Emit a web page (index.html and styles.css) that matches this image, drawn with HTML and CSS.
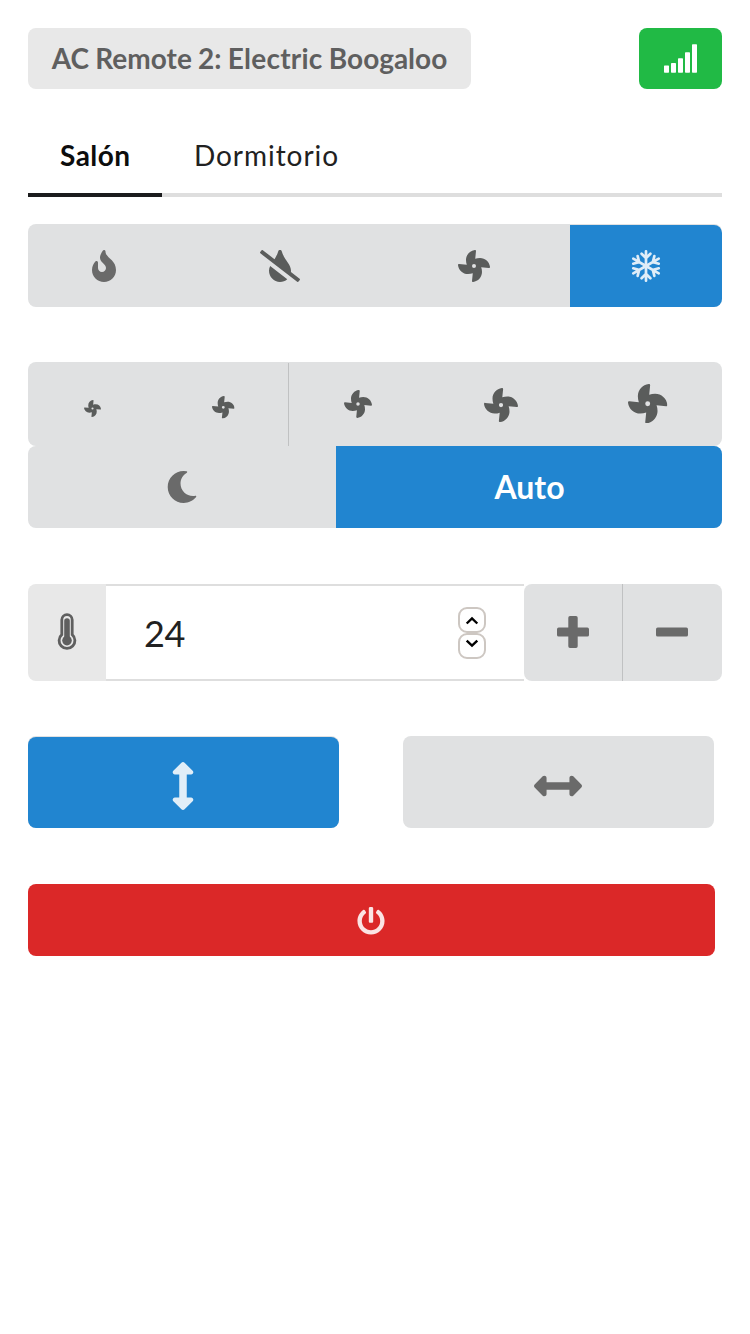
FILE: index.html
```html
<!DOCTYPE html>
<html lang="es">
<head>
<meta charset="utf-8">
<title>AC Remote 2: Electric Boogaloo</title>
<link rel="stylesheet" href="styles.css">
</head>
<body>
<svg class="defs" aria-hidden="true">
  <symbol id="fan" viewBox="0 0 512 512"><path d="M352.57 128c-28.09 0-54.09 4.52-77.06 12.86l12.41-123.11C289 7.31 279.81-1.18 269.33.13 189.63 10.13 128 77.64 128 159.43c0 28.09 4.52 54.09 12.86 77.06L17.75 224.08C7.31 223-1.18 232.19.13 242.67c10 79.7 77.51 141.33 159.3 141.33 28.09 0 54.09-4.52 77.06-12.86l-12.41 123.11c-1.05 10.43 8.11 18.93 18.59 17.62 79.7-10 141.33-77.51 141.33-159.3 0-28.09-4.52-54.09-12.86-77.06l123.11 12.41c10.44 1.05 18.93-8.11 17.62-18.59-10-79.7-77.51-141.33-159.3-141.33zM256 288a32 32 0 1 1 32-32 32 32 0 0 1-32 32z"/></symbol>
  <symbol id="arrows" viewBox="0 0 256 512"><path d="M214.059 377.941H168V134.059h46.059c21.382 0 32.09-25.851 16.971-40.971L144.971 7.029c-9.373-9.373-24.568-9.373-33.941 0L24.971 93.088c-15.119 15.119-4.411 40.971 16.971 40.971H88v243.882H41.941c-21.382 0-32.09 25.851-16.971 40.971l86.059 86.059c9.373 9.373 24.568 9.373 33.941 0l86.059-86.059c15.12-15.119 4.412-40.971-16.97-40.971z"/></symbol>
</svg>
<main class="remote">
  <header class="top">
    <h1 class="title">AC Remote 2: <span class="title-wide">Electric</span> Boogaloo</h1>
    <div class="signal"><svg width="33" height="29" viewBox="0 0 33 29"><rect y="21.4" width="5" height="7.3" rx=".7"/><rect x="7" y="19" width="5" height="9.7" rx=".7"/><rect x="14" y="14.3" width="5" height="14.4" rx=".7"/><rect x="21" y="8.3" width="5" height="20.4" rx=".7"/><rect x="28" y=".2" width="5" height="28.5" rx=".7"/></svg></div>
  </header>
  <nav class="tabs">
    <a class="tab tab-active">Salón</a>
    <a class="tab tab-second">Dormitorio</a>
  </nav>
  <div class="group modes">
    <button class="seg"><svg class="soft" width="24" height="32" viewBox="0 0 384 512"><path d="M216 23.86c0-23.8-30.65-32.77-44.15-13.04C48 191.85 224 200 224 288c0 35.63-29.11 64.46-64.85 63.99-35.17-.45-63.15-29.77-63.15-64.94v-85.51c0-21.7-26.47-32.23-41.43-16.5C27.8 213.16 0 261.33 0 320c0 105.87 86.13 192 192 192s192-86.13 192-192c0-170.29-168-193-168-296.14z"/></svg></button>
    <button class="seg"><svg width="40" height="32" viewBox="0 0 640 512"><path d="M633.82 458.1L494.97 350.78c.52-5.57 1.03-11.16 1.03-16.87 0-111.76-99.79-153.34-146.78-311.82-7.94-28.78-49.44-30.12-58.44 0-15.52 52.34-36.87 91.96-58.49 125.68L45.47 3.37C38.49-2.05 28.43-.8 23.01 6.18L3.37 31.45C-2.05 38.42-.8 48.47 6.18 53.9l588.36 454.73c6.98 5.43 17.03 4.17 22.46-2.81l19.64-25.27c5.41-6.97 4.16-17.02-2.82-22.45zM144 333.91C144 432.35 222.72 512 320 512c44.71 0 85.37-16.96 116.4-44.7L162.72 255.78c-11.41 23.5-18.72 48.35-18.72 78.13z"/></svg></button>
    <button class="seg"><svg width="32" height="32"><use href="#fan"/></svg></button>
    <button class="seg active"><svg class="snow" width="32" height="32" viewBox="-16 -16 32 32"><g id="arm"><path d="M0 0V-14.700M-4.400-12.200L0-7.900l4.400-4.300"/></g><use href="#arm" transform="rotate(60)"/><use href="#arm" transform="rotate(120)"/><use href="#arm" transform="rotate(180)"/><use href="#arm" transform="rotate(240)"/><use href="#arm" transform="rotate(300)"/></svg></button>
  </div>
  <div class="group speeds">
    <button class="seg speed-1"><svg width="17" height="17"><use href="#fan"/></svg></button>
    <button class="seg speed-2"><svg width="22.6" height="22.6"><use href="#fan"/></svg></button>
    <button class="seg speed-3"><svg width="28" height="28"><use href="#fan"/></svg></button>
    <button class="seg speed-4"><svg width="34" height="34"><use href="#fan"/></svg></button>
    <button class="seg speed-5"><svg width="39.4" height="39.4"><use href="#fan"/></svg></button>
  </div>
  <div class="group extras">
    <button class="seg"><svg class="soft" width="32" height="32" viewBox="0 0 512 512"><path d="M283.211 512c78.962 0 151.079-35.925 198.857-94.792 7.068-8.708-.639-21.43-11.562-19.35-124.203 23.654-238.262-71.576-238.262-196.954 0-72.222 38.662-138.635 101.498-174.394 9.686-5.512 7.25-20.197-3.756-22.23A258.156 258.156 0 0 0 283.211 0c-141.309 0-256 114.511-256 256 0 141.309 114.511 256 256 256z"/></svg></button>
    <button class="seg active auto">Auto</button>
  </div>
  <div class="temperature">
    <div class="thermo"><svg width="20" height="38" viewBox="0 0 20 38"><path class="tube" d="M4.800 21.600V6.800a5.200 5.200 0 0 1 10.400 0v14.800a7.900 7.900 0 1 1-10.400 0z"/><path class="mercury" d="M10 8.100V27"/><circle cx="10" cy="27.600" r="4.800"/></svg></div>
    <div class="field"><span class="value">24</span>
      <div class="spinner"><span class="step"><svg width="14" height="9" viewBox="0 0 14 9"><path d="M1.700 7.500l5.300-5 5.300 5"/></svg></span><span class="step step-down"><svg width="14" height="9" viewBox="0 0 14 9"><path d="M1.700 1.700l5.300 5 5.300-5"/></svg></span></div>
    </div>
    <div class="adjust">
      <button class="plus"><svg class="soft" width="32" height="32" viewBox="0 0 32 32"><path d="M13 0h6q1.700 0 1.700 1.700v9.900h9.600q1.700 0 1.700 1.700v5.600q0 1.700-1.700 1.700h-9.600v9.700q0 1.700-1.700 1.700h-6q-1.700 0-1.700-1.700v-9.700H1.700Q0 20.600 0 18.900v-5.600q0-1.700 1.700-1.700h9.600V1.700Q11.300 0 13 0z"/></svg></button>
      <button class="minus"><svg class="soft" width="32" height="32" viewBox="0 0 32 32"><rect y="11.600" width="32" height="9" rx="1.700"/></svg></button>
    </div>
  </div>
  <div class="swing">
    <button class="swing-btn swing-on"><span class="face"><svg width="24" height="48"><use href="#arrows"/></svg></span></button>
    <button class="swing-btn"><svg class="soft turned" width="24" height="48"><use href="#arrows"/></svg></button>
  </div>
  <button class="power"><svg width="28" height="28" viewBox="0 0 512 512"><path d="M400 54.1c63 45 104 118.6 104 201.9 0 136.8-110.8 247.7-247.5 248C120 504.3 8.2 393 8 256.4 7.9 173.1 48.9 99.3 111.8 54.2c11.7-8.3 28-4.8 35 7.7L162.6 90c5.9 10.5 3.1 23.8-6.6 31-41.5 30.8-68 79.6-68 134.9-.1 92.3 74.5 168.1 168 168.1 91.6 0 168.6-74.2 168-169.1-.3-51.8-24.7-101.8-68.1-134-9.7-7.2-12.4-20.5-6.5-30.9l15.8-28.1c7-12.4 23.2-16.1 34.8-7.8zM296 264V24c0-13.3-10.7-24-24-24h-32c-13.3 0-24 10.7-24 24v240c0 13.3 10.7 24 24 24h32c13.3 0 24-10.7 24-24z"/></svg></button>
</main>
</body>
</html>
```
FILE: styles.css
```css
* { box-sizing: border-box; }
body { margin: 0; background: #fff; font-family: Lato, "Open Sans", sans-serif; color: #212121; }
button { border: 0; margin: 0; padding: 0; font: inherit; background: none; display: flex; align-items: center; justify-content: center; }
svg { display: block; flex: none; fill: #5a5c5b; }
.soft { fill: #6a6a6a; }
.defs { position: absolute; width: 0; height: 0; }
.remote { padding: 28px; display: flex; flex-direction: column; }

.top { display: flex; justify-content: space-between; height: 61px; }
.title { margin: 0; width: 443px; background: #e8e8e8; border-radius: 8px; color: #5f5f5f; font-size: 28px; font-weight: 700; line-height: 61px; text-align: center; white-space: nowrap; word-spacing: -.6px; }
.title-wide { letter-spacing: .25px; }
.signal { width: 83px; border-radius: 8px; background: #21ba45; display: flex; align-items: center; justify-content: center; }
.signal svg { fill: #fff; }

.tabs { margin-top: 38px; height: 70px; display: flex; border-bottom: 4px solid #dedede; }
.tab { height: 70px; line-height: 57px; padding: 0 32px; font-size: 28px; white-space: nowrap; }
.tab-active { width: 134px; font-weight: 700; letter-spacing: .45px; color: #0d0d0d; border-bottom: 4px solid #1b1c1d; }
.tab-second { letter-spacing: .95px; }

.group { display: grid; background: #e0e1e2; border-radius: 8px; overflow: hidden; }
.active { background: #2185d0; }
.modes { margin-top: 27px; height: 83px; padding-top: 1px; grid-template-columns: 152px 200px 190px 152px; }
.modes .seg:nth-child(3) { padding-right: 2px; }
.modes .active { border-top-right-radius: 8px; }
.snow { fill: none; stroke: #dfedf8; stroke-width: 2.7; stroke-linecap: round; }
.speeds { margin-top: 55px; height: 84px; padding-top: 1px; grid-template-columns: 129px 132px 138.4px 147px 147.6px; }
.speeds .seg { align-items: flex-start; }
.speed-1 { padding-top: 37px; }
.speed-2 { padding: 33px 0 0 2px; border-right: 1px solid #c0c1c2; }
.speed-3 { padding-top: 27px; }
.speed-4 { padding-top: 25px; }
.speed-5 { padding-top: 21px; }
.extras { height: 82px; grid-template-columns: 308px 386px; }
.auto { color: #fff; font-size: 32px; font-weight: 700; padding: 0 0 2px 1px; }

.temperature { margin-top: 56px; height: 97px; display: flex; }
.thermo { width: 78px; padding-bottom: 2px; background: #e8e8e8; border-radius: 8px 0 0 8px; display: flex; align-items: center; justify-content: center; }
.thermo svg { fill: #5f5f5f; }
.thermo .tube { fill: none; stroke: #5f5f5f; stroke-width: 2.8; }
.thermo .mercury { fill: none; stroke: #5f5f5f; stroke-width: 5.6; stroke-linecap: round; }
.field { flex: 1; display: flex; align-items: center; justify-content: space-between; padding: 0 38px; border-top: 2px solid #dedede; border-bottom: 2px solid #dedede; }
.value { font-size: 36px; letter-spacing: -.5px; }
.spinner { display: flex; flex-direction: column; }
.step { width: 28px; height: 26px; border: 2px solid #cdc7c2; border-radius: 9px; display: flex; align-items: center; justify-content: center; }
.step:first-child { padding-top: 1px; }
.step-down { padding-bottom: 5px; }
.step svg { fill: none; stroke: #000; stroke-width: 2.4; }
.adjust { width: 198px; display: flex; background: #e0e1e2; border-radius: 8px; }
.plus { width: 99px; padding-bottom: 1px; border-right: 1px solid #c0c1c2; }
.minus { width: 99px; padding: 0 2px 1px 0; }

.swing { margin-top: 55px; display: flex; gap: 64px; }
.swing-btn { width: 311px; height: 92px; background: #e0e1e2; border-radius: 8px; padding: 8px 2px 0 0; }
.swing-on { padding: 1px 0 0; }
.face { width: 311px; height: 91px; padding: 7px 2px 0 0; display: flex; align-items: center; justify-content: center; background: #2185d0; border-radius: 8px; }
.face svg { fill: #e1eef8; }
.turned { transform: rotate(90deg); }
.power { margin-top: 56px; width: 687px; height: 72px; padding: 1px 2px 0 0; background: #db2828; border-radius: 8px; }
.power svg { fill: #fbe4e4; }
```
